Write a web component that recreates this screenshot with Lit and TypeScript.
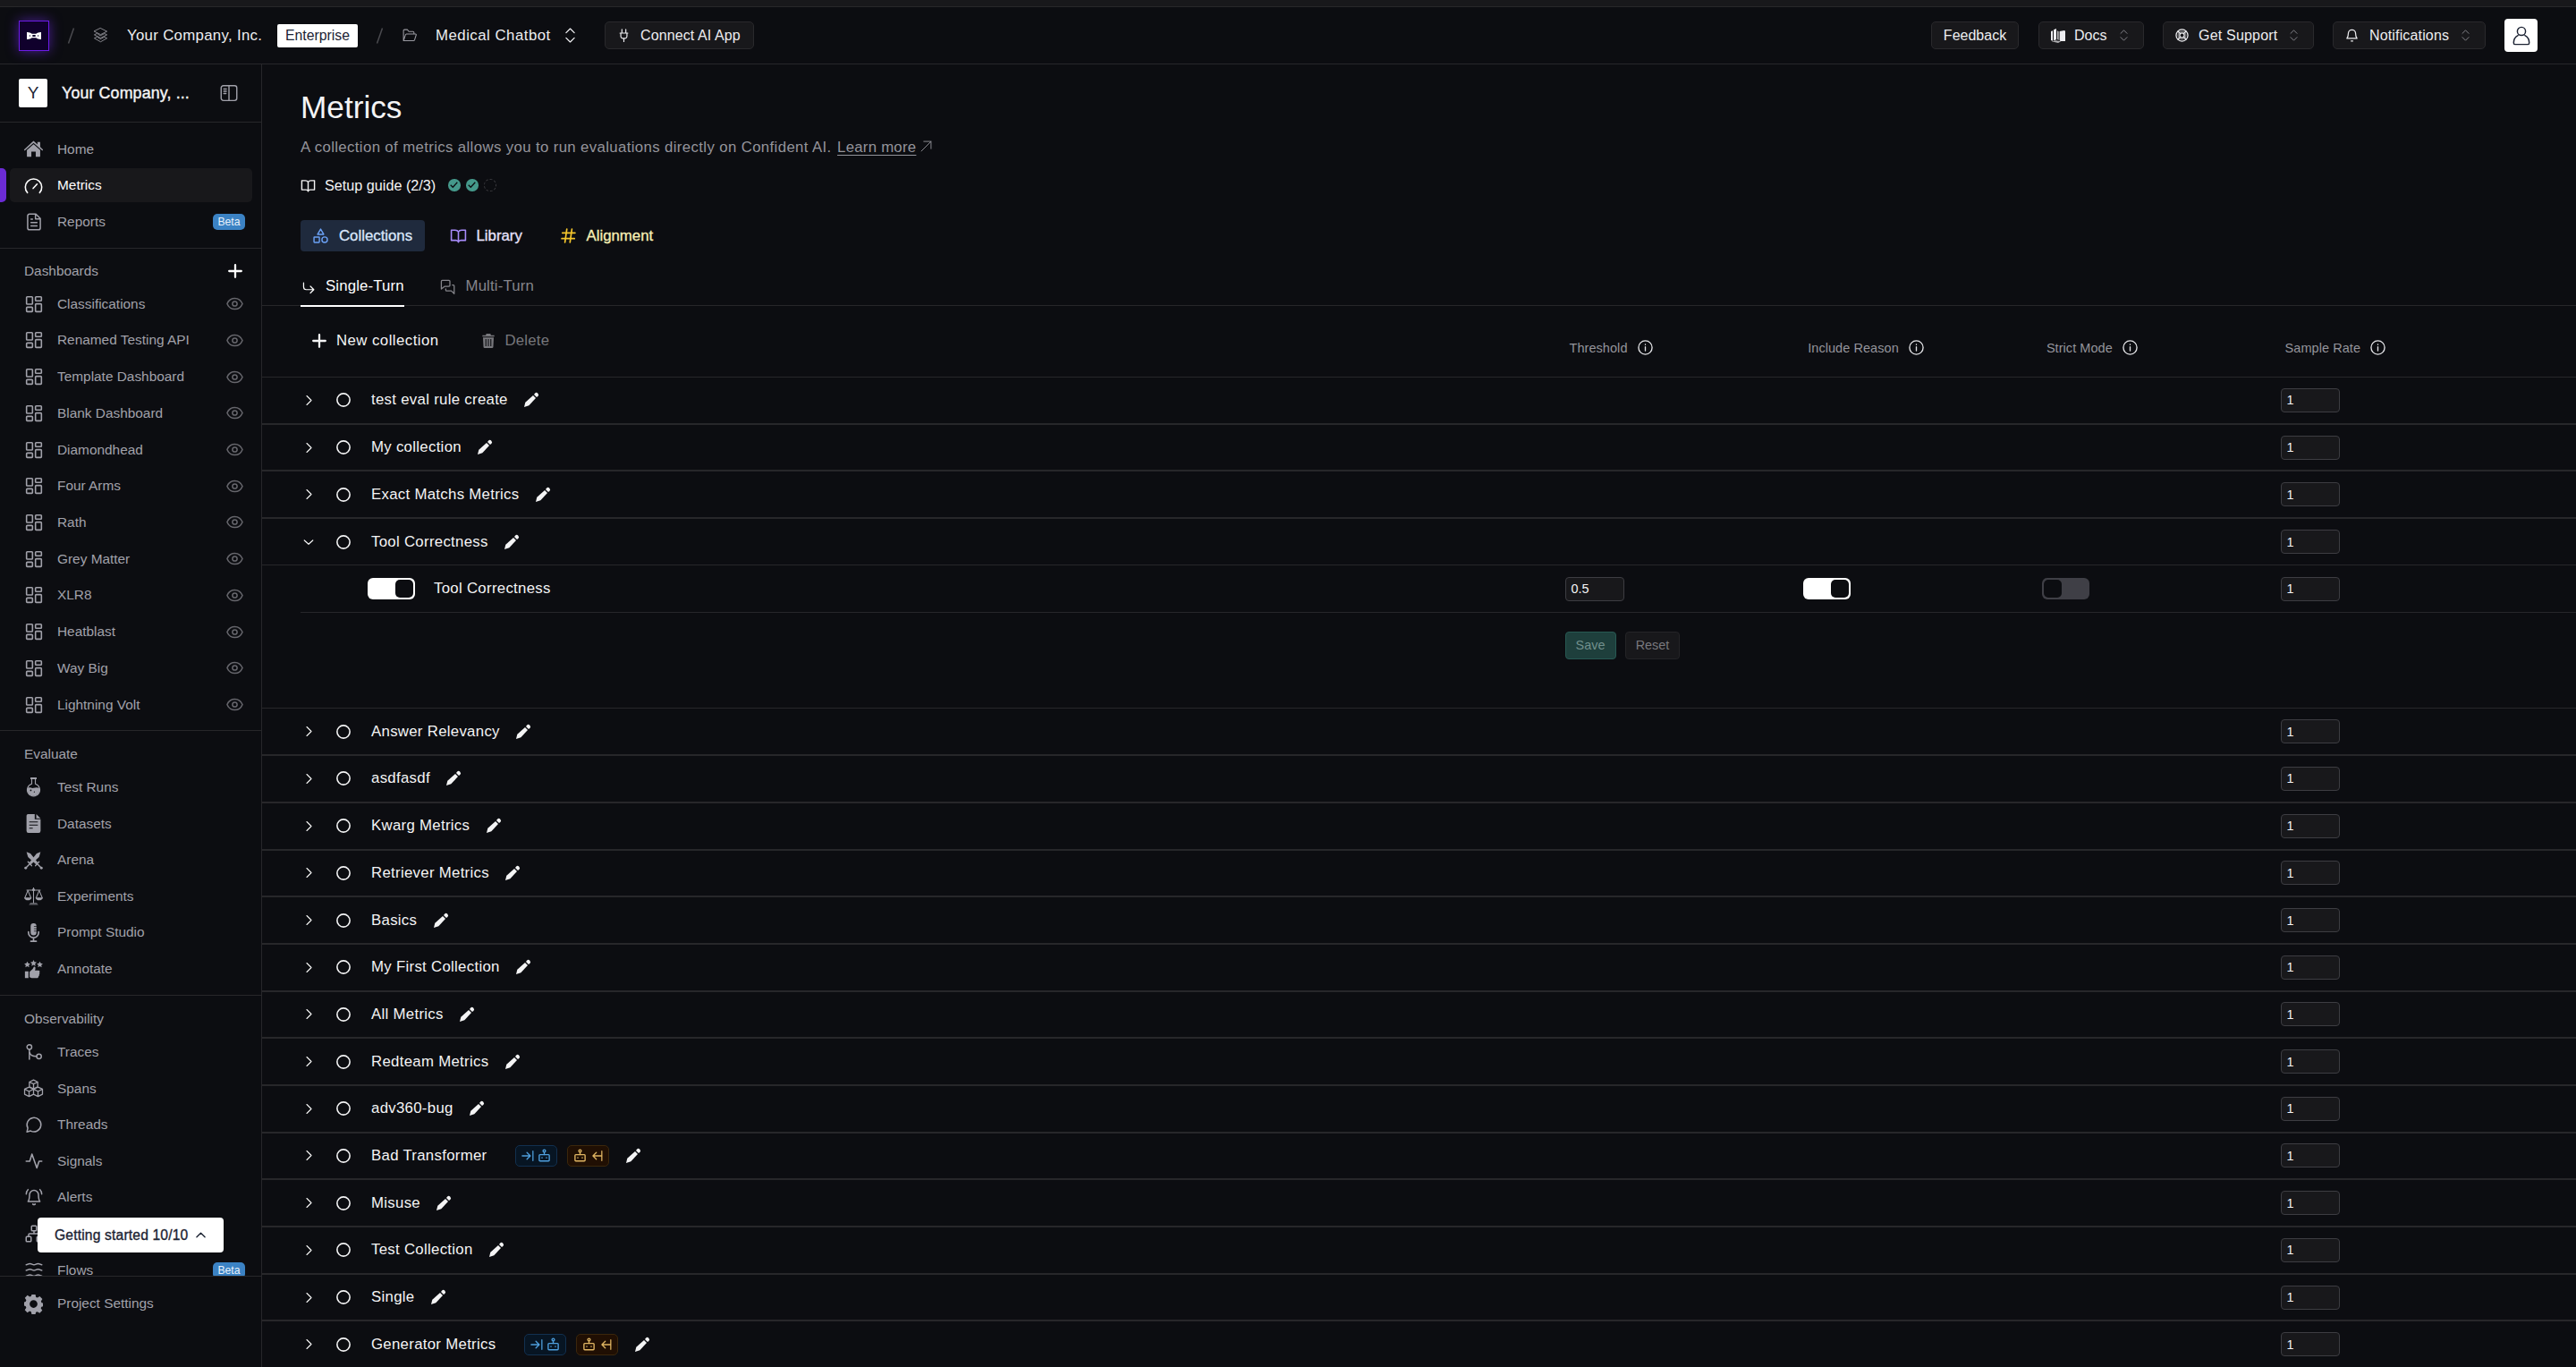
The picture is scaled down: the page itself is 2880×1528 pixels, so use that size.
import { LitElement, html, css, svg, nothing } from "lit";
import type { SVGTemplateResult, TemplateResult } from "lit";
import { customElement, property } from "lit/decorators.js";
import { classMap } from "lit/directives/class-map.js";

const line = (body: SVGTemplateResult, w = 2) => svg`<g fill="none" stroke="currentColor" stroke-width=${w} stroke-linecap="round" stroke-linejoin="round">${body}</g>`;
const solid = (body: SVGTemplateResult) => svg`<g fill="currentColor">${body}</g>`;

const bookOpen = svg`<path d="M12 6.500C11 4.600 9.500 4 7.500 4H2v14.500h6.500c1.800 0 3 .8 3.500 2.500.5-1.700 1.700-2.500 3.500-2.500H22V4h-5.500C14.500 4 13 4.600 12 6.500zM12 6.500V21"/>`;
const robot = svg`<rect x="3" y="10.500" width="18" height="11.500" rx="1.500"/><path d="M12 6.500v4M8 16v.5M16 16v.5"/><circle cx="12" cy="4" r="2.200"/>`;

const ICONS: Record<string, SVGTemplateResult> = {
  layers: line(svg`<path d="M12 .8 22 5.800 12 10.800 2 5.800z"/><path d="M5.800 9.200 2 11.100l10 5 10-5-3.800-1.900L12 12.300z"/><path d="M5.800 14.600 2 16.500l10 5.700 10-5.700-3.800-1.900L12 17.700z"/>`, 1.2),
  folder: line(svg`<path d="M3 20.500V4.500A1.500 1.500 0 0 1 4.500 3H9l2.500 3H18a1.500 1.500 0 0 1 1.500 1.500V10M3 20.500 6 11.500a2 2 0 0 1 1.800-1.500H22a1 1 0 0 1 1 1.300l-2.500 8a1.800 1.800 0 0 1-1.700 1.200z"/>`, 1.5),
  updown: line(svg`<path d="m5.500 16 6.500 6.500 6.500-6.500M5.500 8 12 1.500 18.500 8"/>`, 1.8),
  plug: line(svg`<path d="M12 23v-5M8.500 8V1.500M15.500 8V1.500M5 8h14M6.500 8v5a4 4 0 0 0 4 4.500h3a4 4 0 0 0 4-4.500V8"/>`, 1.9),
  life: line(svg`<circle cx="12" cy="12" r="10.500"/><circle cx="12" cy="12" r="4.200"/><path d="m4.900 4.900 4.200 4.200M14.900 14.900l4.200 4.200M14.900 9.100l4.200-4.200M4.900 19.100l4.200-4.200"/><circle cx="12" cy="12" r="7" opacity=".45"/>`, 2),
  bell: line(svg`<path d="M3 17.500C5 15 5.500 13 5.500 8.500a6.500 6.500 0 0 1 13 0c0 4.500.5 6.500 2.500 9z"/><path d="M10.500 22h3"/>`, 2),
  bellring: line(svg`<path d="M4 18C6 15.500 6 13 6 9a6 6 0 0 1 12 0c0 4 0 6.500 2 9z"/><path d="M10.300 21.500c1 .9 2.400.9 3.400 0M4 2C2.500 3.500 1.600 5.700 1.600 8M20 2c1.500 1.500 2.400 3.700 2.400 6"/>`, 1.8),
  user: line(svg`<circle cx="12" cy="6.500" r="5"/><path d="M7.800 11.500C4 13.500 2.500 17 2.500 20.500c0 1.300.5 2 1.500 2h16c1 0 1.500-.7 1.500-2 0-3.500-1.500-7-5.300-9"/>`, 1.6),
  docs: solid(svg`<path d="M0 4.500 3 3.500v17L0 19.500zM4.500 2 9 0v18.500L4.500 20zM14.500 4.500l8-1.500 1.500 1v17h-8l-1.500-1z"/><path d="m1 21.500 7-1.500 4 .5 5 1-5 2.500z" opacity=".7"/><path d="M10.500 3.500 13 5v14l-2.500-1z" opacity=".75"/>`),
  panel: line(svg`<rect x="1.500" y="2" width="21" height="20" rx="3"/><path d="M12 2v20M5 6.500h3.500M5 9.500h3.500M5 12.500h3"/>`, 1.7),
  home: solid(svg`<path d="M11.300 2.200a1 1 0 0 1 1.400 0L17 6.200V3h3.500v6.500l3.300 3a.8.8 0 0 1-1.100 1.200L12 4.300 1.300 13.700a.8.8 0 0 1-1.100-1.200z"/><path d="m12 6 8.500 7.400V21a1 1 0 0 1-1 1H14.800v-6.500H9.200V22H4.500a1 1 0 0 1-1-1v-7.600z"/>`),
  gauge: line(svg`<path d="M4.200 21A10.500 10.500 0 1 1 19.800 21M11.500 15.500l5-5.500"/>`, 1.8),
  filetext: line(svg`<path d="M14.500 1.500H6A2.500 2.500 0 0 0 3.500 4v16A2.500 2.500 0 0 0 6 22.500h12a2.500 2.500 0 0 0 2.500-2.500V7.500zM14 1.500V8h6.500M8 8.500h2M8 13h8M8 17.500h8"/>`, 1.8),
  dash: line(svg`<rect x="2" y="2" width="8" height="10" rx="1"/><rect x="14" y="2" width="8" height="5.500" rx="1"/><rect x="14" y="11.500" width="8" height="10.500" rx="1"/><rect x="2" y="16" width="8" height="6" rx="1"/>`, 1.9),
  eye: line(svg`<path d="M1.200 12C3 7.500 7 4.300 12 4.300s9 3.200 10.800 7.700C21 16.500 17 19.700 12 19.700S3 16.500 1.200 12z"/><circle cx="12" cy="12" r="3.300"/>`, 1.9),
  plus: line(svg`<path d="M12 1.800v20.400M1.800 12h20.400"/>`, 3.4),
  flask: solid(svg`<path d="M8 0h8v2.300H8z"/><path fill="none" stroke="currentColor" stroke-width="1.300" d="M9.700 2v6.200a8 8 0 1 0 4.600 0V2"/><path d="M4.500 13.500c3-1.500 5 .8 7.500 0s4.500-1 7.500 0a7.800 7.800 0 1 1-15 0z"/><circle cx="8.500" cy="16.500" r="1" fill="#0c0d11"/><circle cx="13" cy="18.500" r=".7" fill="#0c0d11"/>`),
  file: solid(svg`<path d="M5 0h8.500v6.500H21V21.500A2.500 2.500 0 0 1 18.500 24h-13A2.500 2.500 0 0 1 3 21.500V2a2 2 0 0 1 2-2zM15.500 0 21 5.500h-5.500z"/><path d="M6.500 10h11M6.500 14h11M6.500 18h4.500" stroke="#0c0d11" stroke-width="1.300"/>`),
  swords: solid(svg`<path d="M3 1.500 8 3.500l9.500 11.500-2.200 2.300L5 8z"/><path d="m21 1.500-5 2L6.500 15l2.200 2.300L19 8z"/><path fill="none" stroke="currentColor" stroke-width="1.700" stroke-linecap="round" d="m19 14-4.500 5M17.500 17.500 22 22M5 14l4.500 5M6.500 17.500 2 22"/><circle cx="22" cy="22" r="1.700"/><circle cx="2" cy="22" r="1.700"/>`),
  scale: solid(svg`<path fill="none" stroke="currentColor" stroke-width="1.200" d="M12 1v20M3 4.500h18M4.800 5 .8 14.500M4.800 5l4 9.500M19.200 5l-4 9.500M19.200 5l4 9.500"/><circle cx="12" cy="4" r="1.800"/><path d="M0 14h9.600c-.5 2.500-2.300 3.500-4.800 3.500S.5 16.500 0 14zM14.400 14H24c-.5 2.500-2.300 3.500-4.800 3.500s-4.300-1-4.800-3.500z"/><path d="M8 20.500h8l2 3H6z" opacity=".55"/>`),
  mic: solid(svg`<rect x="8.300" y="0" width="7.400" height="15.500" rx="3.700"/><path d="M12.500 4h4M12.500 7h4M12.500 10h4" stroke="#0c0d11" stroke-width=".8"/><path fill="none" stroke="currentColor" stroke-width="1.900" stroke-linecap="round" d="M5.500 11v1a6.500 6.500 0 0 0 13 0v-1M12 18.500V23M8.500 23h7"/>`),
  annotate: solid(svg`<path d="m12 0 1.200 2.500 2.800.4-2 2 .5 2.700L12 6.300 9.500 7.600l.5-2.700-2-2 2.800-.4zM4 2l1.200 2.400 2.700.4-2 1.900.5 2.600L4 8 1.600 9.300l.5-2.600-2-1.900 2.700-.4zM20 2l1.200 2.400 2.700.4-2 1.900.5 2.600L20 8l-2.400 1.300.5-2.600-2-1.900 2.700-.4z"/><path d="M1 14.500h4.500V23H1zM7 15l4-3.500 1.500-3c2-.3 2.500 1.500 1.300 5h4.700c1.500 0 1.800 1.500 1 2.500.6 1 .4 2-.3 2.700.3 1-.1 1.800-.9 2.300 0 1.300-.7 2-2 2H9.500L7 22z"/>`),
  traces: line(svg`<circle cx="5.800" cy="5.200" r="3.200"/><circle cx="18.700" cy="17.800" r="3.200"/><path d="M5.800 8.400V21.500M5.800 11.500c.8 4 5 6.300 9.700 6.300"/>`, 1.8),
  boxes: line(svg`<path d="M12 1.300 17.300 4v6L12 12.700 6.700 10V4zM6.700 4 12 6.500 17.300 4M12 6.500v6M6.300 10.500 12 13v6.500l-5.700 3-5.700-3V13zM.6 13l5.700 3 5.700-3M6.300 16v6.500M17.700 10.500l5.700 2.500v6.500l-5.700 3-5.700-3V13zM12 13l5.700 3 5.700-3M17.700 16v6.500"/>`, 1.5),
  chat: line(svg`<path d="M7.500 20.500A9.400 9.400 0 1 0 3.700 16.700L2.500 22z"/>`, 1.8),
  activity: line(svg`<path d="M22.500 12h-3.700l-3 9-6.500-18.500-3 9.500H1.500"/>`, 1.9),
  org: line(svg`<rect x="8.700" y="1.500" width="6.600" height="6.600" rx="1"/><rect x="1.500" y="16" width="6.600" height="6.600" rx="1"/><rect x="15.900" y="16" width="6.600" height="6.600" rx="1"/><path d="M4.800 16v-2.800a1.200 1.200 0 0 1 1.200-1.200h12a1.200 1.200 0 0 1 1.200 1.200V16M12 12V8"/>`, 1.8),
  waves: line(svg`<path d="M1.500 4.500c2 0 2.500-1.500 5-1.500s3.200 1.500 5.500 1.500S15 3 17.500 3s3 1.500 5 1.500M1.500 12c2 0 2.500-1.500 5-1.500S9.700 12 12 12s3-1.500 5.500-1.500 3 1.500 5 1.500M1.500 19.500c2 0 2.500-1.500 5-1.500s3.200 1.500 5.500 1.500 3-1.500 5.500-1.500 3 1.500 5 1.500"/>`, 1.9),
  gear: solid(svg`<path fill-rule="evenodd" d="M9.600 0h4.800l.7 3.300 1.900.8 2.900-1.800 3.400 3.400-1.800 2.900.8 1.900 1.700.4v4.200l-1.900.5-.8 1.900 1.900 2.900-3.400 3.400-2.900-1.900-1.900.8-.6 2.300H9.600L8.900 22l-1.900-.8-2.900 1.900L.8 19.700l1.900-2.900-.8-1.900L0 14.400V9.600l1.900-.5.800-1.900L.9 4.300 4.200.9l2.900 1.900L9 2zM12 7a5 5 0 1 0 0 10 5 5 0 0 0 0-10z"/>`),
  book: line(bookOpen, 2),
  shapes: line(svg`<path d="M12 1.500 16.800 9.800H7.200z"/><rect x="1.500" y="14" width="8.500" height="8.500" rx=".8"/><circle cx="18.300" cy="18.200" r="4.300"/>`, 2),
  hash: line(svg`<path d="M2.500 7.500h20M1.500 16.500h20M9.500 1.500 6.500 22.500M17.500 1.500l-3 21"/>`, 2.4),
  corner: line(svg`<path d="M2.500 2v8a5 5 0 0 0 5 5h14M15.500 8.500 22 15l-6.500 6.500"/>`, 2.1),
  chats: line(svg`<path d="M13.500 11.500H7L2 15.500V3.500A1.500 1.500 0 0 1 3.500 2h10.500a1.500 1.500 0 0 1 1.500 1.500v6.500a1.500 1.500 0 0 1-1.500 1.500M19.500 9.500h1.500a1.300 1.300 0 0 1 1.300 1.300V23l-4.500-4.500h-7.500a1.300 1.300 0 0 1-1.300-1.300V15.500"/>`, 1.8),
  trash: solid(svg`<path d="M8.500 0h7l.8 2.500H22V5H2V2.500h5.700z"/><path fill-rule="evenodd" d="M3 6.500h18L20.200 22a2 2 0 0 1-2 2H5.800a2 2 0 0 1-2-2zM7 9v12h1.700V9zm4.200 0v12h1.600V9zm4.100 0v12H17V9z"/>`),
  outarrow: line(svg`<path d="M2 22 22 2M7 2h15v15"/>`, 1.7),
  info: line(svg`<circle cx="12" cy="12" r="10.700"/><path d="M12 10.800v6.200M12 7v.4"/>`, 1.9),
  chevR: line(svg`<path d="m8 4 8 8-8 8"/>`, 1.8),
  chevD: line(svg`<path d="m2.500 8 9.500 8.500L21.500 8"/>`, 2.4),
  chevU: line(svg`<path d="m2 17 10-10 10 10"/>`, 3),
  pencil: solid(svg`<path d="m15 4.500 4.500 4.500L8 21.500 0 24l2-8z"/><path d="M16.500 3 18 1a3.300 3.300 0 0 1 5 5l-2 1.500z"/>`),
  circle: line(svg`<circle cx="12" cy="12" r="10.700"/>`, 2.4),
  bot: line(robot, 2.2),
  toRight: line(svg`<path d="M1.500 12h15M10.500 5.500 17 12l-6.500 6.500M22 3v18"/>`, 2.2),
  toLeft: line(svg`<path d="M22 12H6M11.500 5.500 5 12l6.500 6.500M22 3v18"/>`, 2.2),
  bow: solid(svg`<path fill-rule="evenodd" d="M0 6c3-.5 6 1 8.500 2.500h7C18 7 21 5.500 24 6v12c-3 .5-6-1-8.500-2.500h-7C6 17 3 18.500 0 18zM9.500 10.500v3h5v-3z"/><circle cx="5" cy="12" r="1" fill="#10002c"/><circle cx="19" cy="12" r="1" fill="#10002c"/>`),
};

const icon = (name: string, size: number, cls = "") =>
  html`<svg class=${"ic " + cls} width=${size} height=${size} viewBox="0 0 24 24">${ICONS[name]}</svg>`;

const base = css`
  :host, * { box-sizing: border-box; }
  .ic { display: block; flex: none; overflow: visible; }
  .row { display: flex; align-items: center; }
`;

@customElement("top-header")
class TopHeader extends LitElement {
  static styles = [base, css`
    :host { display: flex; align-items: center; height: 64px; padding: 0 43px 0 21px; border-bottom: 1px solid #27272a; color: #ededf0; font-size: 16.800px; white-space: nowrap; }
    .logo { width: 34px; height: 34px; border: 1.500px solid #6d1be8; background: #10002c; box-shadow: 0 0 14px #6a28e0a0; display: grid; place-items: center; color: #fff; }
    .gap { padding: 0 21px; }
    .mut { color: #9a9aa1; }
    .org { margin-left: 21px; width: 168px; letter-spacing: .32px; }
    .tag { width: 90px; height: 26px; background: #fff; color: #1c2333; border-radius: 2px; display: grid; place-items: center; font-size: 15.800px; }
    .proj { margin-left: 21px; width: 142px; letter-spacing: .5px; }
    .btn { display: flex; align-items: center; height: 31px; border: 1px solid #29292c; border-radius: 5px; background: #18181b; font-size: 16px; }
    .connect { width: 167px; padding-left: 13px; gap: 11px; margin-left: 30px; letter-spacing: .1px; }
    .right { margin-left: auto; display: flex; align-items: center; gap: 21px; }
    .btn .end { margin-left: auto; margin-right: 15px; color: #85858b; }
    .fb { width: 98px; justify-content: center; }
    .docs { width: 118px; padding-left: 13px; gap: 10px; margin-left: 1px; }
    .sup { width: 169px; padding-left: 13px; gap: 11px; letter-spacing: .2px; }
    .noti { width: 171px; padding-left: 13px; gap: 12px; letter-spacing: .15px; }
    .ava { width: 37px; height: 37px; border-radius: 4px; background: #fff; color: #1c2333; display: grid; place-items: center; }
  `];
  render() {
    const slash = html`<svg class="ic" width="7" height="18" viewBox="0 0 7 18"><path d="M6.500 .5 .5 17.500" stroke="#4b4b50" stroke-width="1.500"/></svg>`;
    return html`
      <div class="logo">${icon("bow", 16)}</div>
      <div class="row gap">${slash}</div>
      ${icon("layers", 17, "mut")}<span class="org">Your Company, Inc.</span>
      <span class="tag">Enterprise</span>
      <div class="row gap">${slash}</div>
      ${icon("folder", 17, "mut")}<span class="proj">Medical Chatbot</span>
      ${icon("updown", 17)}
      <div class="btn connect">${icon("plug", 15)}<span>Connect AI App</span></div>
      <div class="right">
        <div class="btn fb">Feedback</div>
        <div class="btn docs">${icon("docs", 16)}<span>Docs</span>${icon("updown", 13, "end")}</div>
        <div class="btn sup">${icon("life", 15)}<span>Get Support</span>${icon("updown", 13, "end")}</div>
        <div class="btn noti">${icon("bell", 15)}<span>Notifications</span>${icon("updown", 13, "end")}</div>
        <div class="ava">${icon("user", 22)}</div>
      </div>`;
  }
}

interface NavItem { icon: string; label: string; beta?: boolean; active?: boolean; }

const MAIN: NavItem[] = [
  { icon: "home", label: "Home" },
  { icon: "gauge", label: "Metrics", active: true },
  { icon: "filetext", label: "Reports", beta: true },
];
const DASHBOARDS = ["Classifications", "Renamed Testing API", "Template Dashboard", "Blank Dashboard", "Diamondhead", "Four Arms", "Rath", "Grey Matter", "XLR8", "Heatblast", "Way Big", "Lightning Volt"];
const EVALUATE: NavItem[] = [
  { icon: "flask", label: "Test Runs" }, { icon: "file", label: "Datasets" }, { icon: "swords", label: "Arena" },
  { icon: "scale", label: "Experiments" }, { icon: "mic", label: "Prompt Studio" }, { icon: "annotate", label: "Annotate" },
];
const OBSERVE: NavItem[] = [
  { icon: "traces", label: "Traces" }, { icon: "boxes", label: "Spans" }, { icon: "chat", label: "Threads" },
  { icon: "activity", label: "Signals" }, { icon: "bellring", label: "Alerts" }, { icon: "org", label: "" },
  { icon: "waves", label: "Flows", beta: true },
];

@customElement("side-nav")
class SideNav extends LitElement {
  static styles = [base, css`
    :host { position: relative; display: flex; flex-direction: column; width: 293px; flex: none; border-right: 1px solid #27272a; color: #a1a1aa; font-size: 15.400px; white-space: nowrap; }
    .org { display: flex; align-items: center; height: 65px; flex: none; padding: 0 26px 0 21px; border-bottom: 1px solid #27272a; }
    .tile { width: 32px; height: 32px; border-radius: 2px; background: #fff; color: #1c2333; display: grid; place-items: center; font-size: 19px; }
    .name { margin-left: 16px; color: #f4f4f5; font-size: 17.800px; letter-spacing: .15px; -webkit-text-stroke: .4px #f4f4f5; margin-right: auto; }
    .org .ic { color: #a1a1aa; }
    .scroll { height: 1289px; overflow: hidden; flex: none; }
    .group { border-bottom: 1px solid #27272a; }
    .g1 { height: 141px; padding-top: 9.200px; }
    .g2 { height: 539px; }
    .g3 { height: 296px; }
    .g4 { border: 0; }
    .title { display: flex; align-items: center; justify-content: space-between; padding: 9.300px 21px 0 27px; height: 42.600px; }
    .g2 .title { height: 41.300px; padding-top: 9px; }
    .title .ic { color: #fff; }
    .item { display: flex; align-items: center; height: 40.650px; padding: 0 18px 0 27px; }
    .item.small { height: 40.720px; padding-right: 20px; }
    .item span { margin-left: 16px; line-height: 12px; }
    .item .beta { margin-left: auto; width: 36px; height: 18px; border-radius: 5px; background: #3b82c4; color: #e8f1fa; font-size: 12.200px; display: grid; place-items: center; }
    .dim { margin-left: auto; color: #66666c; }
    .slot { width: 21px; display: grid; place-items: center; }
    .active { color: #fff; height: 38px; margin: 1.300px 10px 1.300px 0; padding: 0; }
    .active .mark { width: 7px; height: 38px; margin: 0 4px 0 0; background: #6b2bd4; border-radius: 0 5px 5px 0; }
    .active .fill { display: flex; align-items: center; flex: 1; height: 38px; border-radius: 5px; background: #18181b; padding-left: 16px; margin: 0; }
    .foot { border-top: 1px solid #27272a; height: 61px; padding-left: 27px; display: flex; align-items: center; gap: 16px; }
    .pop { position: absolute; left: 42px; top: 1289px; width: 208px; height: 39px; border-radius: 4px; background: #fff; color: #1c2333; font-size: 15.600px; letter-spacing: .18px; -webkit-text-stroke: .35px #1c2333; display: flex; align-items: center; padding-left: 19px; gap: 9px; }
  `];
  private item(i: NavItem): TemplateResult {
    const size = { filetext: 20, traces: 20, chat: 20, activity: 20, bellring: 20, org: 20, waves: 20 }[i.icon] ?? 21;
    const glyph = html`<div class="slot">${icon(i.icon, size)}</div>`;
    if (i.active) return html`<div class="item active"><i class="mark"></i><div class="fill">${glyph}<span>${i.label}</span></div></div>`;
    return html`<div class="item">${glyph}<span>${i.label}</span>${i.beta ? html`<div class="beta">Beta</div>` : nothing}</div>`;
  }
  render() {
    return html`
      <div class="org"><div class="tile">Y</div><span class="name">Your Company, ...</span>${icon("panel", 20)}</div>
      <div class="scroll">
        <div class="group g1">${MAIN.map((i) => this.item(i))}</div>
        <div class="group g2">
          <div class="title">Dashboards${icon("plus", 16)}</div>
          ${DASHBOARDS.map((d) => html`<div class="item small"><div class="slot">${icon("dash", 20)}</div><span>${d}</span>${icon("eye", 19, "dim")}</div>`)}
        </div>
        <div class="group g3"><div class="title">Evaluate</div>${EVALUATE.map((i) => this.item(i))}</div>
        <div class="group g4"><div class="title">Observability</div>${OBSERVE.map((i) => this.item(i))}</div>
      </div>
      <div class="foot">${icon("gear", 21)}<span>Project Settings</span></div>
      <div class="pop"><span>Getting started 10/10</span>${icon("chevU", 11)}</div>`;
  }
}

@customElement("ui-toggle")
class UiToggle extends LitElement {
  @property({ type: Boolean }) on = false;
  static styles = css`
    :host { display: block; width: 53px; height: 24px; flex: none; }
    .t { display: flex; box-sizing: border-box; height: 24px; padding: 2px; border-radius: 6px; background: #3f3f46; }
    .on { background: #fff; justify-content: flex-end; }
    .k { width: 20px; height: 20px; border-radius: 5px; background: #0c0d11; }
  `;
  render() {
    return html`<div class=${classMap({ t: true, on: this.on })}><div class="k"></div></div>`;
  }
}

interface Collection { name: string; open?: boolean; badges?: boolean; }
const COLLECTIONS: Collection[] = [
  { name: "test eval rule create" }, { name: "My collection" }, { name: "Exact Matchs Metrics" }, { name: "Tool Correctness", open: true },
  { name: "Answer Relevancy" }, { name: "asdfasdf" }, { name: "Kwarg Metrics" }, { name: "Retriever Metrics" }, { name: "Basics" },
  { name: "My First Collection" }, { name: "All Metrics" }, { name: "Redteam Metrics" }, { name: "adv360-bug" },
  { name: "Bad Transformer", badges: true }, { name: "Misuse" }, { name: "Test Collection" }, { name: "Single" },
  { name: "Generator Metrics", badges: true },
];

@customElement("metrics-page")
class MetricsPage extends LitElement {
  static styles = [base, css`
    :host { display: flex; flex-direction: column; flex: 1; min-width: 0; height: 1456px; overflow: hidden; color: #f4f4f5; font-size: 16.800px; white-space: nowrap; }
    .head { height: 270px; flex: none; padding-left: 43px; border-bottom: 1px solid #27272a; display: flex; flex-direction: column; }
    .head > * { flex: none; }
    h1 { margin: 27px 0 0; height: 42px; line-height: 42px; font-size: 35.200px; font-weight: 400; }
    .sub { color: #94949b; height: 24px; margin-top: 12px; letter-spacing: .37px; }
    .sub u { margin-left: 6.500px; letter-spacing: .25px; text-underline-offset: 3px; text-decoration-thickness: 1px; }
    .sub .ic { margin-left: 5px; margin-top: -3px; }
    .guide { height: 24px; margin-top: 18px; font-size: 16.200px; gap: 0; }
    .guide span { margin: 0 14px 0 10px; }
    .dot { width: 13.400px; height: 13.400px; border-radius: 50%; background: #45998b; margin-right: 6.600px; display: grid; place-items: center; color: #0c0d11; }
    .dot.off { background: none; border: 1px dashed #3a3a3e; }
    .tabs { display: flex; margin-top: 27px; height: 35px; }
    .tab { display: flex; align-items: center; height: 35px; border-radius: 4px; padding: 0 14px; -webkit-text-stroke: .3px; }
    .tab .ic { -webkit-text-stroke: 0; }
    .t1 { width: 139px; background: #1f2a3d; color: #dbe7fb; gap: 12px; } .t1 .ic { color: #6ba1f5; }
    .t2 { margin-left: 13.500px; color: #e9e3fd; gap: 11px; width: 112px; } .t2 .ic { color: #a78bfa; }
    .t3 { margin-left: 12.500px; color: #f8f0b5; gap: 11.500px; } .t3 .ic { color: #f5c62c; }
    .subtabs { display: flex; margin-top: 18px; gap: 39.500px; height: 44px; }
    .st { display: flex; align-items: center; height: 44px; padding-bottom: 2px; color: #85858b; gap: 12px; letter-spacing: .15px; }
    .st.on { color: #fff; border-bottom: 2px solid #fff; width: 116px; padding-bottom: 0; }
    .st.on .ic { margin: 3px 0 0 2px; }
    .bar { height: 80px; flex: none; border-bottom: 1px solid #27272a; display: flex; }
    .tools { width: 1456.500px; flex: none; display: flex; padding-left: 56px; height: 79px; align-items: center; }
    .tools .grp { display: flex; align-items: center; height: 40px; gap: 11px; margin-top: -1px; letter-spacing: .45px; }
    .tools .del { color: #77777c; margin-left: 47px; letter-spacing: .2px; }
    .col { width: 266.700px; flex: none; display: flex; align-items: center; }
    .bar .col { color: #94949b; font-size: 14.500px; padding-left: 5px; gap: 11px; margin-top: 14px; letter-spacing: .06px; }
    .bar .col .ic { color: #e4e4e7; }
    .line { height: 52.700px; flex: none; display: flex; border-bottom: 2px solid #27272a; }
    .line.open { height: 52.100px; border-bottom-width: 1px; }
    .first { width: 1456.500px; flex: none; display: flex; align-items: center; padding-left: 43px; }
    .chev { width: 18px; display: grid; place-items: center; }
    .circ { margin: 0 23.500px 0 21.500px; }
    .name { letter-spacing: .3px; }
    .pen { margin-left: 18.500px; }
    .badge { width: 47px; height: 24px; border-radius: 5px; display: flex; align-items: center; justify-content: center; gap: 4px; border: 1px solid; }
    .blue { background: #071523; border-color: #12304f; color: #4f9fdd; margin-left: 32px; }
    .orange { background: #200f03; border-color: #3b270c; color: #dfb562; margin-left: 11px; }
    .num { width: 66.500px; height: 27px; border: 1px solid #3d3d42; border-radius: 4px; background: #18181b; font-size: 14.400px; display: flex; align-items: center; padding-left: 6px; }
    .detail { flex: none; height: 160.300px; border-bottom: 1px solid #27272a; padding-left: 43px; }
    .metric { display: flex; height: 53px; border-bottom: 1px solid #27272a; }
    .metric .lead { width: 1413.500px; flex: none; display: flex; align-items: center; padding-left: 75px; gap: 21px; }
    .acts { margin: 20.500px 0 0 1413.500px; display: flex; gap: 10.500px; font-size: 14.400px; }
    .b { height: 31px; width: 57px; border-radius: 4px; display: grid; place-items: center; border: 1px solid #275852; background: #1e3f3c; color: #71908c; }
    .b.r { width: 61px; border-color: #242427; background: #18181b; color: #79797e; }
  `];
  private num(v: string) { return html`<div class="num">${v}</div>`; }
  private line(c: Collection) {
    return html`
      <div class=${classMap({ line: true, open: !!c.open })}>
        <div class="first">
          <div class="chev">${icon(c.open ? "chevD" : "chevR", c.open ? 12 : 15)}</div>
          ${icon("circle", 16, "circ")}
          <span class="name">${c.name}</span>
          ${c.badges ? html`
            <div class="badge blue">${icon("toRight", 14)}${icon("bot", 15)}</div>
            <div class="badge orange">${icon("bot", 15)}${icon("toLeft", 14)}</div>` : nothing}
          ${icon("pencil", 16, "pen")}
        </div>
        <div class="col"></div><div class="col"></div><div class="col"></div>
        <div class="col">${this.num("1")}</div>
      </div>
      ${c.open ? html`
        <div class="detail">
          <div class="metric">
            <div class="lead"><ui-toggle on></ui-toggle><span class="name">Tool Correctness</span></div>
            <div class="col">${this.num("0.5")}</div>
            <div class="col"><ui-toggle on></ui-toggle></div>
            <div class="col"><ui-toggle></ui-toggle></div>
            <div class="col">${this.num("1")}</div>
          </div>
          <div class="acts"><div class="b">Save</div><div class="b r">Reset</div></div>
        </div>` : nothing}`;
  }
  render() {
    const check = html`<svg class="ic" width="9" height="9" viewBox="0 0 9 9"><path d="M.7 4.700 3.300 7.200 8.300 1.800" fill="none" stroke="#0c0d11" stroke-width="1.300"/></svg>`;
    return html`
      <div class="head">
        <h1>Metrics</h1>
        <div class="row sub"><span>A collection of metrics allows you to run evaluations directly on Confident AI.</span><u>Learn more</u>${icon("outarrow", 13)}</div>
        <div class="row guide">${icon("book", 17)}<span>Setup guide (2/3)</span>
          <i class="dot">${check}</i><i class="dot">${check}</i><i class="dot off"></i></div>
        <div class="tabs">
          <div class="tab t1">${icon("shapes", 17)}Collections</div>
          <div class="tab t2">${icon("book", 19)}Library</div>
          <div class="tab t3">${icon("hash", 17)}Alignment</div>
        </div>
        <div class="subtabs">
          <div class="st on">${icon("corner", 14)}Single-Turn</div>
          <div class="st">${icon("chats", 17)}Multi-Turn</div>
        </div>
      </div>
      <div class="bar">
        <div class="tools">
          <div class="grp">${icon("plus", 16)}<span>New collection</span></div>
          <div class="grp del">${icon("trash", 16)}<span>Delete</span></div>
        </div>
        ${["Threshold", "Include Reason", "Strict Mode", "Sample Rate"].map((t) => html`<div class="col">${t}${icon("info", 17)}</div>`)}
      </div>
      ${COLLECTIONS.map((c) => this.line(c))}`;
  }
}

@customElement("app-root")
class AppRoot extends LitElement {
  static styles = css`
    :host { display: block; width: 2880px; height: 1528px; overflow: hidden; background: #0c0d11; font-family: "Helvetica Neue", "Liberation Sans", Arial, sans-serif; }
    .strip { height: 8px; box-sizing: border-box; background: #18181b; border-bottom: 1px solid #27272a; }
    .body { display: flex; height: 1456px; }
  `;
  render() {
    return html`<div class="strip"></div><top-header></top-header><div class="body"><side-nav></side-nav><metrics-page></metrics-page></div>`;
  }
}
